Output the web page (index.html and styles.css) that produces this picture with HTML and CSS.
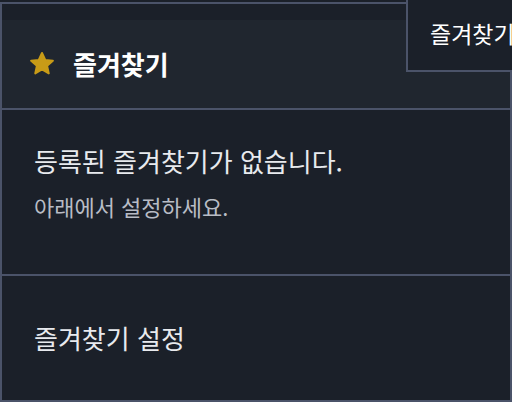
FILE: index.html
```html
<!DOCTYPE html>
<html lang="ko">
<head>
<meta charset="utf-8">
<link rel="stylesheet" href="styles.css">
</head>
<body>
<div class="panel">
  <div class="strip"></div>
  <div class="header">
    <svg class="star" viewBox="0 0 24 24" width="30" height="30"><path d="M12 3.2l2.6 5.6 6.1.6-4.6 4.1 1.3 6-5.4-3.1-5.4 3.1 1.3-6-4.6-4.1 6.1-.6z" fill="#c89b17" stroke="#c89b17" stroke-width="1.6" stroke-linejoin="round"/></svg>
    <span class="title">즐겨찾기</span>
  </div>
  <div class="empty">
    <p class="msg">등록된 즐겨찾기가 없습니다.</p>
    <p class="sub">아래에서 설정하세요.</p>
  </div>
  <div class="footer">
    <span class="link">즐겨찾기 설정</span>
  </div>
</div>
<div class="tooltip">즐겨찾기</div>
</body>
</html>
```
FILE: styles.css
```css
html, body {
  margin: 0;
  padding: 0;
  width: 512px;
  height: 402px;
  overflow: hidden;
  background: #1b2029;
  font-family: "Noto Sans CJK KR", "Noto Sans", sans-serif;
  color: #e8eaee;
}
.panel {
  margin-top: 2px;
  height: 400px;
  box-sizing: border-box;
  border: 2px solid #4b5369;
  display: flex;
  flex-direction: column;
  background: #1b2029;
}
.strip {
  height: 16px;
  flex: none;
  background: #1b2029;
}
.header {
  height: 88px;
  flex: none;
  background: #20262f;
  border-bottom: 2px solid #4b5369;
  display: flex;
  align-items: center;
  padding-left: 25px;
  gap: 16px;
}
.star { display: block; }
.title {
  font-size: 26px;
  font-weight: 700;
  line-height: 34px;
  color: #ffffff;
}
.empty {
  flex: none;
  height: 130px;
  padding: 34px 0 0 32px;
  border-bottom: 2px solid #4b5369;
}
.msg {
  margin: 0;
  font-size: 26px;
  line-height: 34px;
  color: #e8eaee;
}
.sub {
  margin: 14px 0 0;
  font-size: 22px;
  line-height: 28px;
  color: #b8bcc5;
}
.footer {
  flex: 1;
  display: flex;
  align-items: center;
  padding-left: 32px;
}
.link {
  font-size: 26px;
  line-height: 34px;
  color: #e8eaee;
}
.tooltip {
  position: absolute;
  top: 0;
  left: 406px;
  height: 72px;
  box-sizing: border-box;
  border-left: 2px solid #4b5369;
  border-bottom: 2px solid #4b5369;
  background: #1b2029;
  padding: 18px 20px 0 22px;
  font-size: 23px;
  line-height: 30px;
  white-space: nowrap;
  color: #ffffff;
}
```
